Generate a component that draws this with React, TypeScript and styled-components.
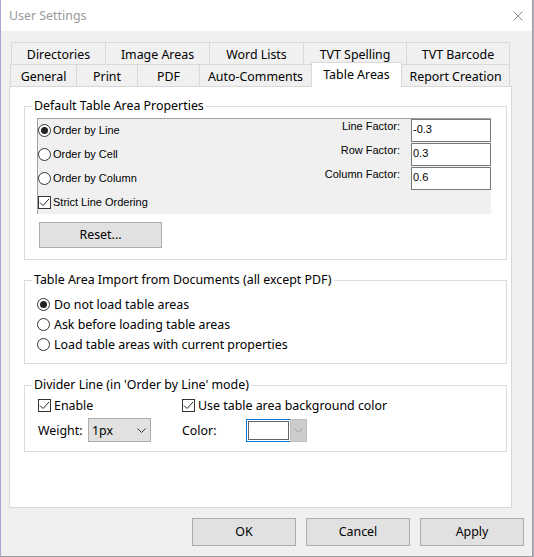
import React from "react";
import styled, { createGlobalStyle } from "styled-components";

const UI = `"Noto Sans", "Open Sans", sans-serif`;
const MS = `"Liberation Sans", Arial, sans-serif`;
const FS = "12.4px";

const GlobalStyle = createGlobalStyle`
  html, body { margin: 0; padding: 0; }
  body { background: #b4b0cc; width: 534px; height: 557px; overflow: hidden; }
  * { box-sizing: border-box; }
`;

const Window = styled.div`
  width: 533px;
  height: 557px;
  display: flex;
  flex-direction: column;
  background: #f0f0f0;
  border-left: 1px solid #a9a7cf;
  border-right: 1px solid #9c9c9c;
  border-bottom: 1px solid #9c9c9c;
  font-family: ${UI};
  font-size: ${FS};
  color: #000;
`;

const TitleBar = styled.div`
  height: 31px;
  flex: none;
  background: #fff;
  display: flex;
  align-items: center;
  justify-content: space-between;
  padding: 0 9px 0 8px;
`;

const Title = styled.span`
  color: #9a9a9a;
  font-size: ${FS};
  line-height: 16px;
`;

const Body = styled.div`
  flex: 1;
  display: flex;
  flex-direction: column;
  padding: 11px 0 0 8px;
`;

const TabRow = styled.div<{ $indent: number }>`
  display: flex;
  padding-left: ${(p) => p.$indent}px;
`;

const Tab = styled.div<{ $w: number; $active?: boolean }>`
  width: ${(p) => p.$w}px;
  height: ${(p) => (p.$active ? 25 : 22)}px;
  margin-top: ${(p) => (p.$active ? -2 : 0)}px;
  margin-bottom: ${(p) => (p.$active ? -1 : 0)}px;
  border: 1px solid #d9d9d9;
  border-bottom: none;
  background: ${(p) => (p.$active ? "#fff" : "#f0f0f0")};
  position: relative;
  z-index: ${(p) => (p.$active ? 1 : 0)};
  display: flex;
  align-items: center;
  justify-content: center;
  padding-top: ${(p) => (p.$active ? 0 : 2)}px;
  font-size: ${FS};
  line-height: 16px;
  white-space: nowrap;
  & + & {
    margin-left: -1px;
  }
`;

const Panel = styled.div`
  width: 503px;
  height: 422px;
  background: #fff;
  border: 1px solid #d9d9d9;
  padding: 11px 4px 0 14px;
  display: flex;
  flex-direction: column;
`;

const Group = styled.fieldset<{ $top: number; $bottom: number; $gap?: number }>`
  margin: ${(p) => p.$gap ?? 0}px 0 0 0;
  min-width: 0;
  border: 1px solid #dcdcdc;
  padding: ${(p) => p.$top}px 15px ${(p) => p.$bottom}px 12px;
`;

const Legend = styled.legend`
  margin-left: -5px;
  padding: 0 2px;
  font-size: ${FS};
  line-height: 16px;
`;

const InnerPanel = styled.div`
  height: 96px;
  background: #f0f0f0;
  border-top: 1px solid #a0a0a0;
  border-left: 1px solid #a0a0a0;
  display: grid;
  grid-template-columns: 1fr auto;
  font-family: ${MS};
  font-size: 11px;
`;

const OptionList = styled.div`
  display: flex;
  flex-direction: column;
  margin-top: -1px;
`;

const Option = styled.label<{ $h: number; $gap: number }>`
  height: ${(p) => p.$h}px;
  display: flex;
  align-items: center;
  gap: ${(p) => p.$gap}px;
  white-space: nowrap;
`;

const RadioCircle = styled.span`
  width: 13px;
  height: 13px;
  flex: none;
  border: 1px solid #333;
  border-radius: 50%;
  background: #fff;
  display: flex;
  align-items: center;
  justify-content: center;
`;

const RadioDot = styled.span`
  width: 7px;
  height: 7px;
  border-radius: 50%;
  background: #222;
`;

const CheckBox = styled.span<{ $indent?: number }>`
  width: 13px;
  height: 13px;
  flex: none;
  margin-left: ${(p) => p.$indent ?? 0}px;
  border: 1px solid #333;
  background: #fff;
  display: flex;
  align-items: center;
  justify-content: center;
`;

const FactorGrid = styled.div`
  display: grid;
  grid-template-columns: auto 80px;
  column-gap: 11px;
  row-gap: 1px;
  align-content: start;
`;

const FactorLabel = styled.span`
  text-align: right;
  padding-top: 1px;
  line-height: 13px;
`;

const FactorInput = styled.div`
  height: 23px;
  border: 1px solid #7a7a7a;
  background: #fff;
  padding: 2px 1px 0;
  font-family: ${MS};
  font-size: 11px;
  line-height: 14px;
`;

const Button = styled.div<{ $w: number; $h: number }>`
  width: ${(p) => p.$w}px;
  height: ${(p) => p.$h}px;
  background: #e1e1e1;
  border: 1px solid #adadad;
  display: flex;
  align-items: center;
  justify-content: center;
  font-size: ${FS};
  line-height: 16px;
`;

const ResetButton = styled(Button)`
  margin: 8px 0 0 2px;
`;

const DividerGrid = styled.div`
  display: grid;
  grid-template-columns: 145px 1fr;
  grid-template-rows: 20px 24px;
  row-gap: 3px;
`;

const Field = styled.div`
  display: flex;
  align-items: center;
`;

const FieldLabel = styled.span<{ $w: number; $indent?: number }>`
  width: ${(p) => p.$w}px;
  padding-left: ${(p) => p.$indent ?? 0}px;
  flex: none;
`;

const Select = styled.div`
  width: 63px;
  height: 24px;
  background: #e1e1e1;
  border: 1px solid #adadad;
  display: flex;
  align-items: center;
  justify-content: space-between;
  padding: 0 4px 0 3px;
`;

const ColorPicker = styled.div`
  display: flex;
  height: 23px;
`;

const Swatch = styled.div`
  width: 44px;
  height: 100%;
  border: 1px solid #0078d7;
  border-right: none;
  padding: 1px;
  background: #fff;
`;

const SwatchInner = styled.div`
  width: 100%;
  height: 100%;
  border: 1px solid #646464;
  background: #fff;
`;

const DropButton = styled.div`
  width: 17px;
  height: 100%;
  background: #cccccc;
  border: 1px solid #bfbfbf;
  display: flex;
  align-items: center;
  justify-content: center;
`;

const ButtonBar = styled.div`
  display: flex;
  justify-content: flex-end;
  gap: 10px;
  padding: 10px 8px 0 0;
`;

const Chevron = ({ color }: { color: string }) => (
  <svg width="9" height="5" viewBox="0 0 9 5">
    <polyline points="0.5,0.5 4.5,4.5 8.5,0.5" fill="none" stroke={color} strokeWidth="1" />
  </svg>
);

const Check = () => (
  <svg width="11" height="11" viewBox="0 0 11 11">
    <polyline points="1,5.5 4,8.5 10,2" fill="none" stroke="#222" strokeWidth="1" />
  </svg>
);

const Radio = ({ on }: { on?: boolean }) => (
  <RadioCircle>{on && <RadioDot />}</RadioCircle>
);

const row1 = [
  { t: "Directories", w: 95 },
  { t: "Image Areas", w: 105 },
  { t: "Word Lists", w: 95 },
  { t: "TVT Spelling", w: 104 },
  { t: "TVT Barcode", w: 104 },
];
const row2 = [
  { t: "General", w: 67 },
  { t: "Print", w: 62 },
  { t: "PDF", w: 63 },
  { t: "Auto-Comments", w: 113 },
  { t: "Table Areas", w: 91, active: true },
  { t: "Report Creation", w: 109 },
];

export default function App() {
  return (
    <>
      <GlobalStyle />
      <Window>
        <TitleBar>
          <Title>User Settings</Title>
          <svg width="10" height="10" viewBox="0 0 10 10">
            <path d="M0.5 0.5 L9.5 9.5 M9.5 0.5 L0.5 9.5" stroke="#8a8a8a" strokeWidth="1" />
          </svg>
        </TitleBar>
        <Body>
          <TabRow $indent={2}>
            {row1.map((r) => (
              <Tab key={r.t} $w={r.w}>{r.t}</Tab>
            ))}
          </TabRow>
          <TabRow $indent={1}>
            {row2.map((r) => (
              <Tab key={r.t} $w={r.w} $active={r.active}>{r.t}</Tab>
            ))}
          </TabRow>
          <Panel>
            <Group $top={4} $bottom={11}>
              <Legend>Default Table Area Properties</Legend>
              <InnerPanel>
                <OptionList>
                  <Option $h={24} $gap={2}><Radio on />Order by Line</Option>
                  <Option $h={24} $gap={2}><Radio />Order by Cell</Option>
                  <Option $h={24} $gap={2}><Radio />Order by Column</Option>
                  <Option $h={24} $gap={2}><CheckBox><Check /></CheckBox>Strict Line Ordering</Option>
                </OptionList>
                <FactorGrid>
                  <FactorLabel>Line Factor:</FactorLabel>
                  <FactorInput>-0.3</FactorInput>
                  <FactorLabel>Row Factor:</FactorLabel>
                  <FactorInput>0.3</FactorInput>
                  <FactorLabel>Column Factor:</FactorLabel>
                  <FactorInput>0.6</FactorInput>
                </FactorGrid>
              </InnerPanel>
              <ResetButton $w={123} $h={26}>Reset...</ResetButton>
            </Group>

            <Group $top={6} $bottom={9} $gap={12}>
              <Legend>Table Area Import from Documents (all except PDF)</Legend>
              <Option $h={20} $gap={4}><Radio on />Do not load table areas</Option>
              <Option $h={20} $gap={4}><Radio />Ask before loading table areas</Option>
              <Option $h={20} $gap={4}><Radio />Load table areas with current properties</Option>
            </Group>

            <Group $top={2} $bottom={9} $gap={13}>
              <Legend>Divider Line (in 'Order by Line' mode)</Legend>
              <DividerGrid>
                <Option $h={20} $gap={3}><CheckBox $indent={1}><Check /></CheckBox>Enable</Option>
                <Option $h={20} $gap={3}><CheckBox><Check /></CheckBox>Use table area background color</Option>
                <Field>
                  <FieldLabel $w={51} $indent={1}>Weight:</FieldLabel>
                  <Select>
                    <span>1px</span>
                    <Chevron color="#333" />
                  </Select>
                </Field>
                <Field>
                  <FieldLabel $w={64}>Color:</FieldLabel>
                  <ColorPicker>
                    <Swatch><SwatchInner /></Swatch>
                    <DropButton><Chevron color="#a0a0a0" /></DropButton>
                  </ColorPicker>
                </Field>
              </DividerGrid>
            </Group>
          </Panel>
          <ButtonBar>
            <Button $w={104} $h={28}>OK</Button>
            <Button $w={104} $h={28}>Cancel</Button>
            <Button $w={104} $h={28}>Apply</Button>
          </ButtonBar>
        </Body>
      </Window>
    </>
  );
}
